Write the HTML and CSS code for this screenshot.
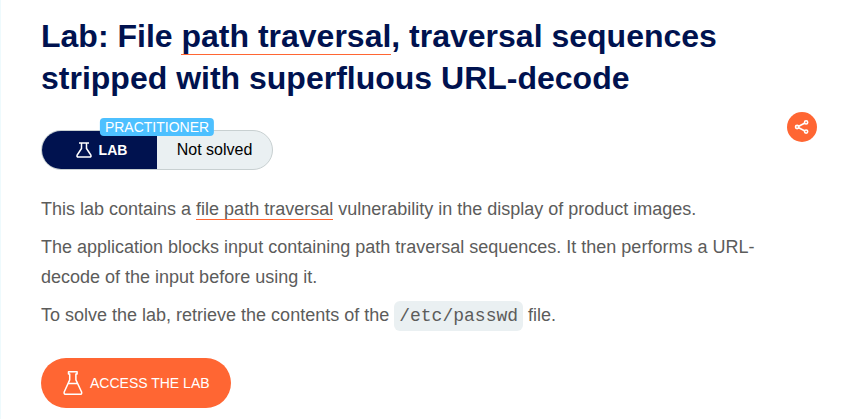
FILE: index.html
```html
<!DOCTYPE html>
<html lang="en">
<head>
<meta charset="utf-8">
<meta name="viewport" content="width=device-width, initial-scale=1">
<title>Lab: File path traversal</title>
<link rel="stylesheet" href="styles.css">
</head>
<body>
<main class="page">
  <h1 class="title">Lab: File <a href="#path-traversal">path traversal</a>, traversal sequences stripped with superfluous URL-decode</h1>
  <div class="meta">
    <div class="status">
      <span class="status-type">
        <svg class="icon-flask" viewBox="0 0 16 16" width="16" height="16" aria-hidden="true">
          <path d="M3 1h10M5.500 1v5.500L1.200 13Q.4 15 2.400 15h11.200Q15.600 15 14.800 13L10.500 6.500V1"/>
        </svg>
        LAB
      </span>
      <span class="status-state">Not solved</span>
      <span class="level">PRACTITIONER</span>
    </div>
    <button class="share" type="button" aria-label="Share">
      <svg viewBox="0 0 16 16" width="16" height="16" aria-hidden="true">
        <path d="M4.700 7.200l5.800-2.900M4.700 8.800l5.800 2.900"/>
        <circle cx="3.100" cy="8" r="1.600"/>
        <circle cx="12.100" cy="3.400" r="1.600"/>
        <circle cx="12.100" cy="12.600" r="1.600"/>
      </svg>
    </button>
  </div>
  <div class="description">
    <p>This lab contains a <a href="#path-traversal">file path traversal</a> vulnerability in the display of product images.</p>
    <p>The application blocks input containing path traversal sequences. It then performs a URL-decode of the input before using it.</p>
    <p>To solve the lab, retrieve the contents of the <code>/etc/passwd</code> file.</p>
  </div>
  <a class="access" href="#launch">
    <svg class="icon-beaker" viewBox="0 0 20 26" width="20" height="26" aria-hidden="true">
      <path d="M5.500 1.700h8.600v2.200h-1.200v6l5.700 12.100Q19.200 24.300 17 24.300h-14Q.6 24.300 1.200 22L6.700 9.900v-6H5.500zM5.200 13.500h9.400"/>
    </svg>
    ACCESS THE LAB
  </a>
</main>
</body>
</html>
```
FILE: styles.css
```css
* {
  box-sizing: border-box;
}

body {
  margin: 0;
  background: #fff;
  color: #5c5c5b;
  font-family: "Liberation Sans", Arial, sans-serif;
  font-size: 18px;
  line-height: 30px;
}

.page {
  min-height: 100vh;
  padding: 15px 39px 11px 40px;
  border-left: 1px solid #eefafd;
}

svg {
  fill: none;
  stroke: #fff;
  stroke-linejoin: round;
}

.title {
  margin: 0;
  padding-right: 40px;
  color: #00124f;
  font-size: 32px;
  line-height: 42px;
}

a {
  color: inherit;
  text-decoration: none;
}

.title a,
.description a {
  border-bottom: 1px solid #ff6633;
}

.meta {
  display: flex;
  align-items: flex-start;
  justify-content: space-between;
  margin-top: 13px;
}

.status {
  position: relative;
  display: grid;
  grid-template-columns: 1fr 1fr;
  width: 232px;
  height: 40px;
  margin-top: 18px;
  border: 1px solid #c8d0d1;
  border-radius: 20px;
  background: #eaf0f2;
  line-height: 38px;
}

.status-type,
.status-state {
  display: flex;
  align-items: center;
  justify-content: center;
}

.status-type {
  gap: 7px;
  padding-left: 4px;
  border-radius: 19px 0 0 19px;
  background: #00124f;
  color: #fff;
  font-size: 14px;
  font-weight: bold;
}

.status-state {
  color: #000;
  font-size: 16px;
}

.level {
  position: absolute;
  top: -13px;
  left: 50%;
  padding: 0 5px;
  transform: translateX(-50%);
  border-radius: 4px;
  background: #4dc0ff;
  color: #fff;
  font-size: 14px;
  line-height: 18px;
}

.icon-flask {
  stroke-width: 1.5;
}

.share {
  display: flex;
  align-items: center;
  justify-content: center;
  width: 30px;
  height: 30px;
  margin: 0;
  padding: 0;
  border: 0;
  border-radius: 50%;
  background: #ff6633;
}

.share svg {
  stroke-width: 1.6;
}

.description {
  margin-top: 24px;
  padding-right: 40px;
}

.description p {
  margin: 0 0 8px;
}

code {
  display: inline-block;
  padding: 0 5px;
  border-radius: 6px;
  background: #eaf0f2;
  font-family: "Liberation Mono", "Courier New", monospace;
  font-size: 18px;
}

.access {
  display: inline-flex;
  align-items: center;
  gap: 7px;
  height: 50px;
  margin-top: 19px;
  padding: 0 21px 0 22px;
  border-radius: 25px;
  background: #ff6633;
  color: #fff;
  font-size: 14px;
}

.icon-beaker {
  stroke-width: 1.5;
}
```
